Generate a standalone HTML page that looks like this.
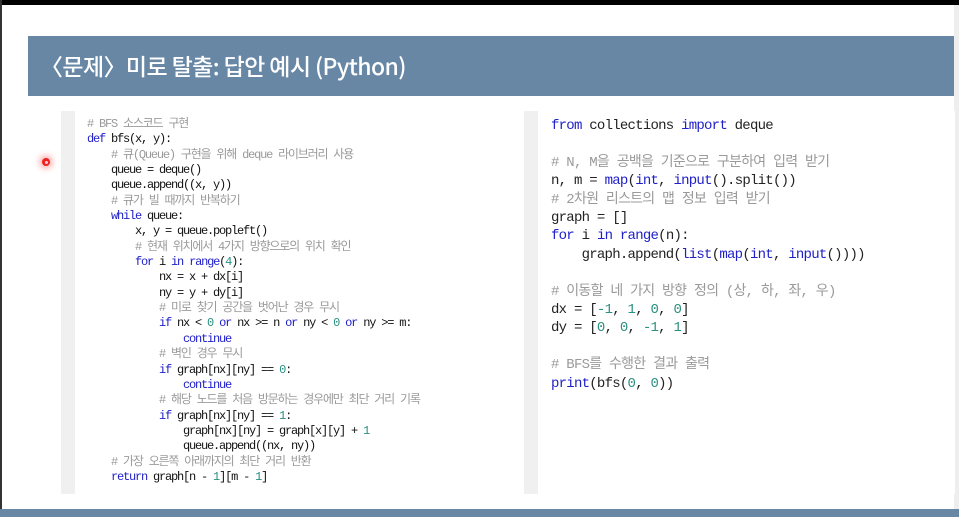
<!DOCTYPE html>
<html><head><meta charset="utf-8"><style>
body{margin:0;width:959px;height:517px;background:#fff;position:relative;overflow:hidden;font-family:"Liberation Sans","Noto Sans CJK KR",sans-serif}
.top{position:absolute;left:0;top:0;width:959px;height:5px;background:#000}
.lb{position:absolute;left:0;top:0;width:2px;height:517px;background:#333}
.rs{position:absolute;right:0;top:5px;width:5px;height:512px;background:#eee}
.hdr{position:absolute;left:28px;top:36px;width:926px;height:60px;background:#6787a5}
.hdr span{position:absolute;left:12px;top:12px;color:#fff;font-size:23px;font-weight:500;font-family:"Noto Sans CJK KR",sans-serif;letter-spacing:-0.6px}
.bot{position:absolute;left:0;top:509px;width:959px;height:8px;background:#6787a5}
.box{position:absolute;top:111px;height:383px;background:#fff;border-left:14px solid #f0f0f0}
pre{margin:0;position:absolute;font-family:"Liberation Mono","Noto Sans CJK KR",monospace;color:#222;white-space:pre}
.l{left:87px;top:117px;font-size:12px;line-height:15.35px;letter-spacing:-1.2px;color:#111}
.r{left:551px;top:117px;font-size:14px;line-height:18.4px;letter-spacing:-0.75px}
.k{color:#2020c8}.n{color:#2a9080}.c{color:#9a9a9a}
.dot{position:absolute;left:42px;top:158px;width:8px;height:8px;border-radius:50%;background:#e22;box-shadow:0 0 6px 3px rgba(255,80,80,.4)}
.dot:after{content:"";position:absolute;left:2.5px;top:2.5px;width:3px;height:3px;border-radius:50%;background:#fcc}
</style></head><body>
<div class="top"></div><div class="lb"></div><div class="rs"></div>
<div class="hdr"><span>〈문제〉미로 탈출: 답안 예시 (Python)</span></div>
<div class="box" style="left:61px;width:419px"></div>
<div class="box" style="left:524px;width:417px"></div>
<div class="dot"></div>
<pre class="l"><span class="c"># BFS 소스코드 구현</span>
<span class="k">def</span> bfs(x, y):
    <span class="c"># 큐(Queue) 구현을 위해 deque 라이브러리 사용</span>
    queue = deque()
    queue.append((x, y))
    <span class="c"># 큐가 빌 때까지 반복하기</span>
    <span class="k">while</span> queue:
        x, y = queue.popleft()
        <span class="c"># 현재 위치에서 4가지 방향으로의 위치 확인</span>
        <span class="k">for</span> i <span class="k">in</span> <span class="k">range</span>(<span class="n">4</span>):
            nx = x + dx[i]
            ny = y + dy[i]
            <span class="c"># 미로 찾기 공간을 벗어난 경우 무시</span>
            <span class="k">if</span> nx &lt; <span class="n">0</span> <span class="k">or</span> nx &gt;= n <span class="k">or</span> ny &lt; <span class="n">0</span> <span class="k">or</span> ny &gt;= m:
                <span class="k">continue</span>
            <span class="c"># 벽인 경우 무시</span>
            <span class="k">if</span> graph[nx][ny] == <span class="n">0</span>:
                <span class="k">continue</span>
            <span class="c"># 해당 노드를 처음 방문하는 경우에만 최단 거리 기록</span>
            <span class="k">if</span> graph[nx][ny] == <span class="n">1</span>:
                graph[nx][ny] = graph[x][y] + <span class="n">1</span>
                queue.append((nx, ny))
    <span class="c"># 가장 오른쪽 아래까지의 최단 거리 반환</span>
    <span class="k">return</span> graph[n - <span class="n">1</span>][m - <span class="n">1</span>]</pre>
<pre class="r"><span class="k">from</span> collections <span class="k">import</span> deque

<span class="c"># N, M을 공백을 기준으로 구분하여 입력 받기</span>
n, m = <span class="k">map</span>(<span class="k">int</span>, <span class="k">input</span>().split())
<span class="c"># 2차원 리스트의 맵 정보 입력 받기</span>
graph = []
<span class="k">for</span> i <span class="k">in</span> <span class="k">range</span>(n):
    graph.append(<span class="k">list</span>(<span class="k">map</span>(<span class="k">int</span>, <span class="k">input</span>())))

<span class="c"># 이동할 네 가지 방향 정의 (상, 하, 좌, 우)</span>
dx = [<span class="n">-1</span>, <span class="n">1</span>, <span class="n">0</span>, <span class="n">0</span>]
dy = [<span class="n">0</span>, <span class="n">0</span>, <span class="n">-1</span>, <span class="n">1</span>]

<span class="c"># BFS를 수행한 결과 출력</span>
<span class="k">print</span>(bfs(<span class="n">0</span>, <span class="n">0</span>))</pre>
<div class="bot"></div>
</body></html>
